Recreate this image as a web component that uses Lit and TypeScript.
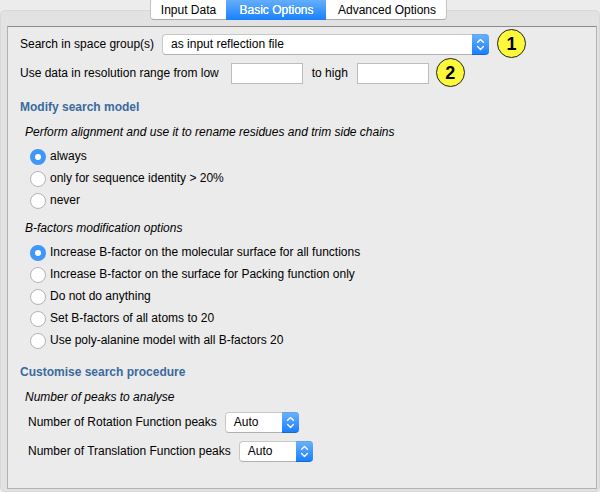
import { LitElement, html, css, svg } from "lit";
import { customElement, property } from "lit/decorators.js";

@customElement("popup-select")
class PopupSelect extends LitElement {
  @property() value = "";

  static styles = css`
    :host { display: flex; height: 21px; box-sizing: border-box; flex: none; }
    .box {
      flex: 1; display: flex; box-sizing: border-box; background: #fff; border-radius: 4px 0 0 4px;
      border: 1px solid #c8c8c8; border-bottom-color: #b0b0b0; border-right: 0; line-height: 18px;
      padding-left: 8px; white-space: nowrap;
    }
    .cap {
      width: 17px; border-radius: 0 4px 4px 0; border-bottom: 1px solid #1568dc; box-sizing: border-box;
      background: linear-gradient(#6cb3fa, #1a80fe); box-shadow: inset 0 1px #5ba6f3;
    }
    svg { display: block; }
  `;

  render() {
    return html`<div class="box"><span>${this.value}</span></div>
      <div class="cap">${svg`<svg width="17" height="20" viewBox="0 0 17 20" fill="none" stroke="#fff" stroke-width="1.4" stroke-linecap="round" stroke-linejoin="round"><path d="M5.6 8.2 8.5 5.4 11.4 8.2M5.6 12.6 8.5 15.4 11.4 12.6"/></svg>`}</div>`;
  }
}

@customElement("app-root")
class AppRoot extends LitElement {
  static styles = css`
    :host {
      display: block; position: relative; width: 600px; height: 492px; overflow: hidden; background: #ececec;
      font: 12px "Liberation Sans", Arial, sans-serif; color: #000;
    }
    .group {
      box-sizing: border-box; height: 482px; margin-top: 10px; padding: 15px 2px 2px 6px;
      background: #e2e2e2; border: 1px solid #d8d8d8; border-radius: 5px;
    }
    .frame { display: flow-root; }
    .panel {
      box-sizing: border-box; height: 463px; background: #ebebeb; padding: 3px 0 0 12px;
      border: 1px solid #b2b2b2; border-top-color: #8c8c8c;
    }
    .tabs {
      position: absolute; left: 150px; top: -2px; width: 297px; height: 22px; display: flex;
      box-sizing: border-box; background: #fff; border: 1px solid #c4c4c4; border-bottom-color: #aaa;
      border-radius: 4px; line-height: 22px; text-align: center;
    }
    .tab { box-sizing: border-box; }
    .tab:nth-child(1) { width: 75px; }
    .tab:nth-child(2) { width: 100px; padding-left: 1px; }
    .tab:nth-child(3) { flex: 1; padding-left: 2px; }
    .tab.on {
      color: #fff; background: linear-gradient(#6cb3fa, #1a80fe); margin: -1px 0; padding-top: 1px;
      text-shadow: 0 0 0.4px #fff;
    }
    .row { display: flex; align-items: center; height: 29px; white-space: nowrap; }
    .label { padding-bottom: 2px; }
    .indent { padding-left: 8px; }
    .field { box-sizing: border-box; width: 72px; height: 21px; background: #fff; border: 1px solid #bcbcbc; }
    .low { margin-left: 12px; }
    .to { margin-left: 9px; }
    .high { margin-left: 9px; }
    .badge {
      box-sizing: border-box; width: 29px; height: 29px; border-radius: 50%; border: 1px solid #222;
      background: #fbf93a; font-weight: bold; font-size: 18px; line-height: 28px; text-align: center;
      margin-left: 8px; flex: none; position: relative; top: -1px;
    }
    .b2 { margin-left: 7px; }
    .wide { width: 327px; margin-left: 8px; }
    .small { width: 74px; margin-left: 8px; }
    h3 { margin: 10px 0 7px; font-size: 12px; line-height: 18px; color: #3a6a9e; }
    h3.second { margin-top: 11px; }
    h4 { margin: 0 0 0 5px; font-size: 12px; line-height: 18px; font-weight: normal; font-style: italic; }
    .options { margin: 5px 0 7px 10px; }
    .option { display: flex; align-items: center; height: 22px; white-space: nowrap; }
    .dot {
      box-sizing: border-box; width: 16px; height: 16px; border-radius: 50%; background: #fff;
      border: 1px solid #b4b4b4; margin-right: 4px;
    }
    .dot.on { border: 5px solid #3f97f8; }
    .peaks { margin-top: 2px; }
  `;

  private models = ["always", "only for sequence identity > 20%", "never"];
  private factors = [
    "Increase B-factor on the molecular surface for all functions",
    "Increase B-factor on the surface for Packing function only",
    "Do not do anything",
    "Set B-factors of all atoms to 20",
    "Use poly-alanine model with all B-factors 20",
  ];

  private radios(items: string[]) {
    return html`<div class="options">${items.map(
      (label, i) => html`<div class="option"><span class="dot ${i === 0 ? "on" : ""}"></span><span class="label">${label}</span></div>`
    )}</div>`;
  }

  render() {
    return html`<div class="frame">
      <div class="group">
        <div class="panel">
          <div class="row"><span class="label">Search in space group(s)</span>
            <popup-select class="wide" value="as input reflection file"></popup-select><span class="badge">1</span></div>
          <div class="row"><span class="label">Use data in resolution range from low</span><span class="field low"></span>
            <span class="label to">to high</span><span class="field high"></span><span class="badge b2">2</span></div>
          <h3>Modify search model</h3>
          <h4>Perform alignment and use it to rename residues and trim side chains</h4>
          ${this.radios(this.models)}
          <h4>B-factors modification options</h4>
          ${this.radios(this.factors)}
          <h3 class="second">Customise search procedure</h3>
          <h4>Number of peaks to analyse</h4>
          <div class="peaks">
            <div class="row indent"><span class="label">Number of Rotation Function peaks</span><popup-select class="small" value="Auto"></popup-select></div>
            <div class="row indent"><span class="label">Number of Translation Function peaks</span><popup-select class="small" value="Auto"></popup-select></div>
          </div>
        </div>
      </div>
      <div class="tabs"><span class="tab">Input Data</span><span class="tab on">Basic Options</span><span class="tab">Advanced Options</span></div>
    </div>`;
  }
}
